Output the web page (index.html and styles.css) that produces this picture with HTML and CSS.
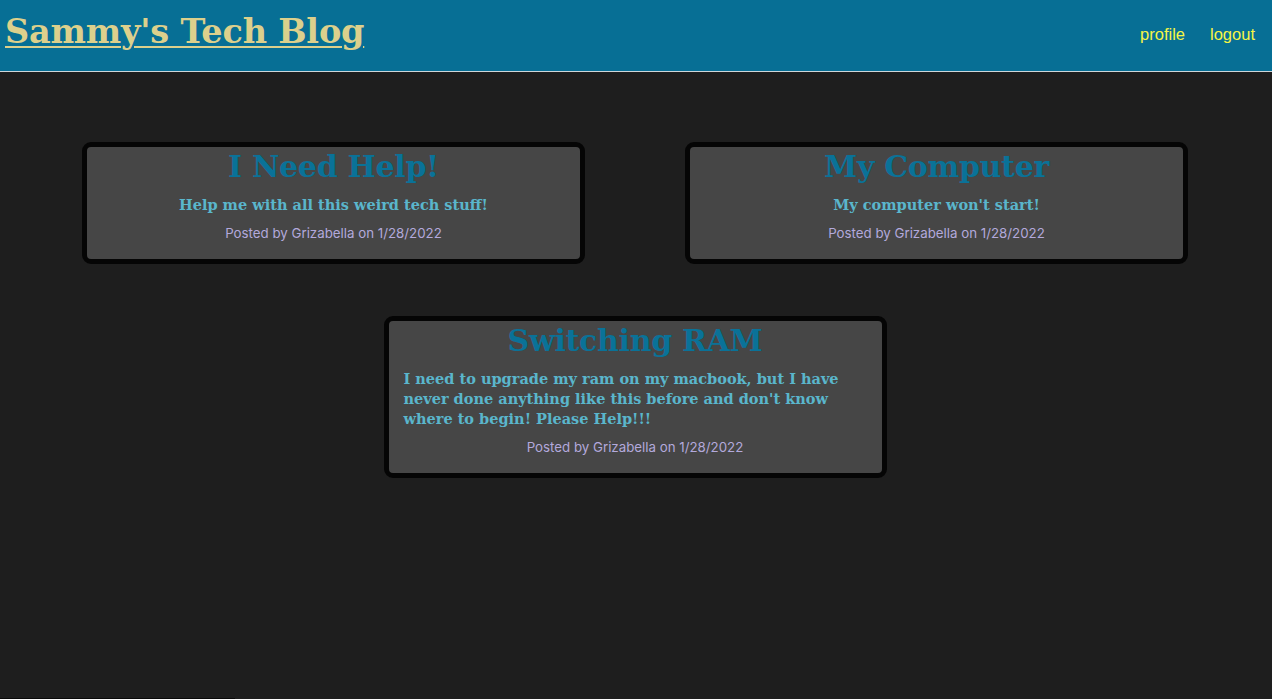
FILE: index.html
```html
<!DOCTYPE html>
<html lang="en">
<head>
<meta charset="utf-8">
<title>Sammy's Tech Blog</title>
<link rel="stylesheet" href="styles.css">
</head>
<body>
<header class="site-header">
  <h1 class="site-title"><a href="#">Sammy's Tech Blog</a></h1>
  <nav class="nav">
    <a href="#">profile</a>
    <a href="#">logout</a>
  </nav>
</header>
<main class="posts">
  <article class="card">
    <h2 class="card-title">I Need Help!</h2>
    <p class="card-text">Help me with all this weird tech stuff!</p>
    <p class="card-meta">Posted by Grizabella on 1/28/2022</p>
  </article>
  <article class="card">
    <h2 class="card-title">My Computer</h2>
    <p class="card-text">My computer won't start!</p>
    <p class="card-meta">Posted by Grizabella on 1/28/2022</p>
  </article>
  <article class="card">
    <h2 class="card-title">Switching RAM</h2>
    <p class="card-text">I need to upgrade my ram on my macbook, but I have never done anything like this before and don't know where to begin! Please Help!!!</p>
    <p class="card-meta">Posted by Grizabella on 1/28/2022</p>
  </article>
</main>
<footer class="footer"></footer>
</body>
</html>
```
FILE: styles.css
```css
html, body {
  margin: 0;
  padding: 0;
}
body {
  background: #1e1e1e;
  min-height: 100vh;
  display: flex;
  flex-direction: column;
  font-family: "Liberation Sans", Arial, sans-serif;
}
.site-header {
  background: #076f95;
  height: 71px;
  border-bottom: 1px solid #cfd6da;
  display: flex;
  align-items: center;
  justify-content: space-between;
  padding: 0 17px 0 5px;
}
.site-title {
  margin: 0 0 8px;
  font-family: "DejaVu Serif", Georgia, serif;
  font-weight: bold;
  font-size: 33.5px;
  line-height: 40px;
  letter-spacing: -0.2px;
}
.site-title a {
  color: #dcd08c;
  text-decoration: underline;
  text-decoration-thickness: 2px;
  text-underline-offset: 3px;
}
.nav {
  display: flex;
  gap: 25px;
  margin-bottom: 2px;
}
.nav a {
  color: #f5f545;
  text-decoration: none;
  font-size: 16.5px;
}
.posts {
  display: flex;
  flex-wrap: wrap;
  justify-content: center;
  column-gap: 100px;
  row-gap: 52px;
  padding-top: 70px;
  padding-right: 2px;
}
.card {
  background: #464646;
  border: 5px solid #050505;
  border-radius: 9px;
  padding: 0 15px 17px;
  box-sizing: content-box;
  width: 463px;
  text-align: center;
}
.card-title {
  margin: 0;
  font-family: "DejaVu Serif", Georgia, serif;
  font-weight: bold;
  font-size: 30px;
  line-height: 40px;
  color: #0a7298;
  letter-spacing: -0.3px;
}
.card-text {
  display: inline-block;
  text-align: left;
  margin: 8px 0 0;
  font-family: "DejaVu Serif", Georgia, serif;
  font-weight: bold;
  font-size: 14.5px;
  line-height: 20px;
  color: #5ab6cc;
}
.card-meta {
  margin: 9px 0 0;
  font-family: Inter, "Noto Sans", sans-serif;
  font-size: 13.3px;
  line-height: 18px;
  color: #b3a9dc;
}
.footer {
  margin-top: auto;
  width: 235px;
  height: 1px;
  background: #0a0a0a;
}
```
